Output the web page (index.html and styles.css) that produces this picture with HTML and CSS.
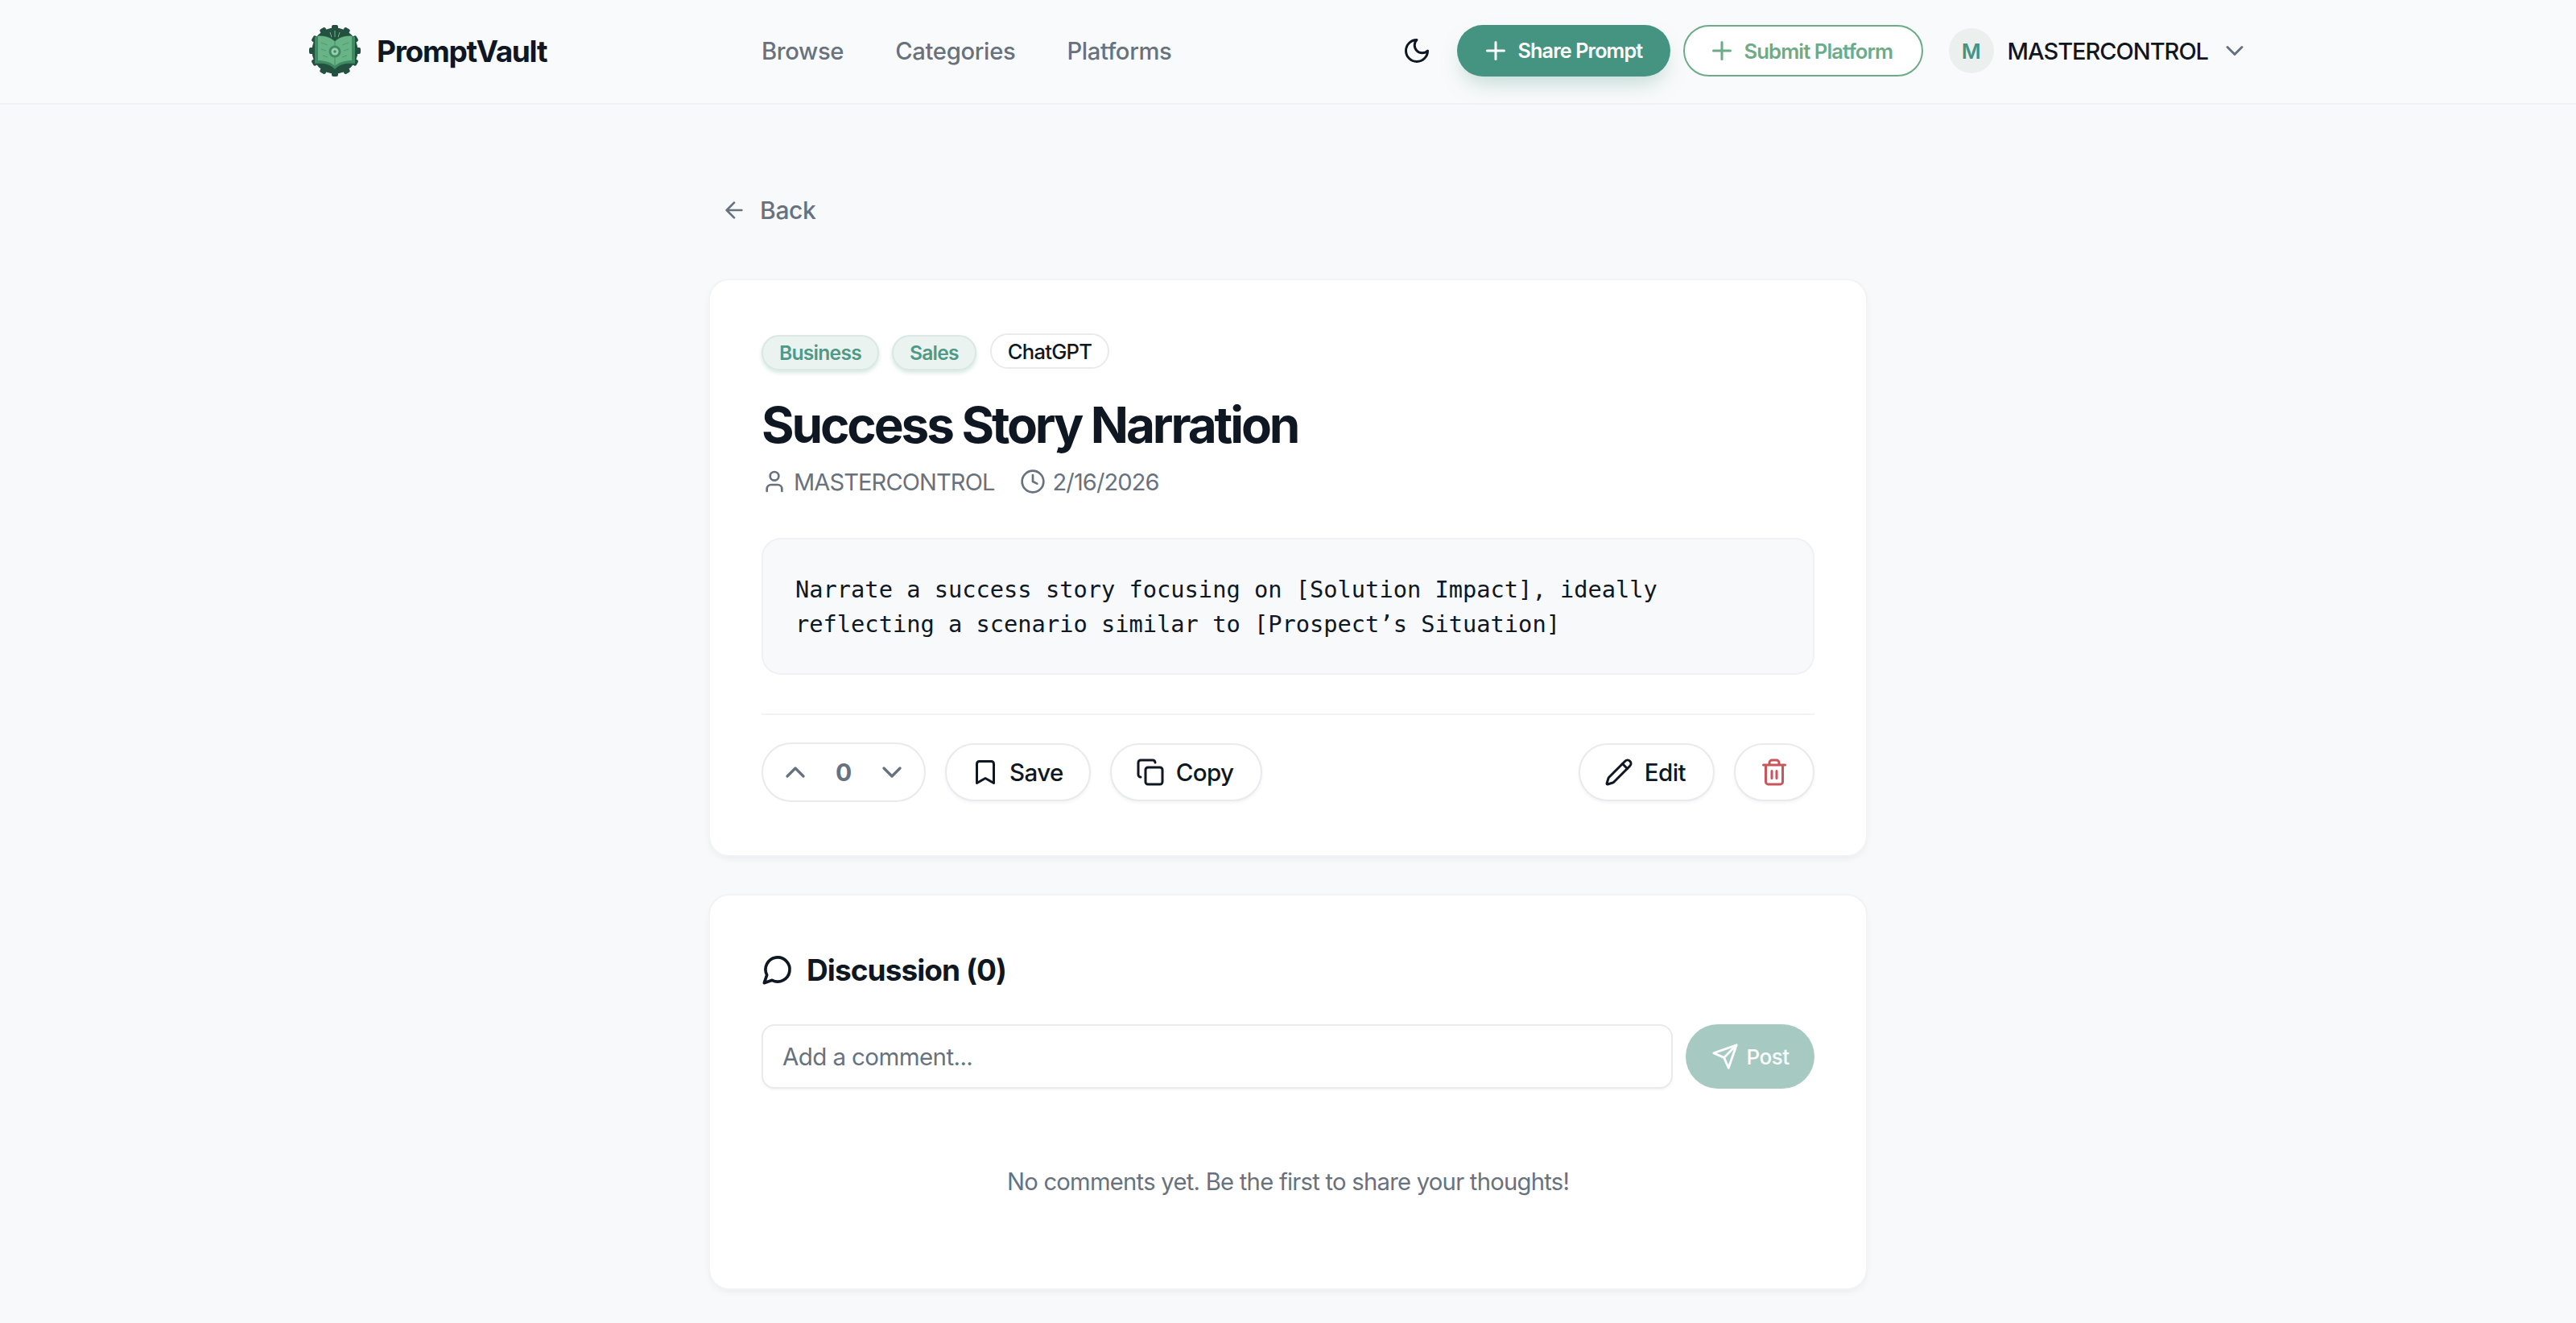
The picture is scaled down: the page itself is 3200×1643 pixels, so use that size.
FILE: index.html
```html
<!DOCTYPE html>
<html lang="en">
<head>
<meta charset="utf-8">
<title>PromptVault</title>
<link rel="stylesheet" href="styles.css">
</head>
<body>
<header class="nav">
  <div class="nav-inner">
    <a class="brand">
      <svg class="logo" viewBox="0 0 64 64">
        <g fill="#23503f">
          <circle cx="32" cy="32" r="28.500"/>
          <rect x="28" y="0" width="8" height="64" rx="2"/>
          <rect x="28" y="0" width="8" height="64" rx="2" transform="rotate(30 32 32)"/>
          <rect x="28" y="0" width="8" height="64" rx="2" transform="rotate(60 32 32)"/>
          <rect x="28" y="0" width="8" height="64" rx="2" transform="rotate(90 32 32)"/>
          <rect x="28" y="0" width="8" height="64" rx="2" transform="rotate(120 32 32)"/>
          <rect x="28" y="0" width="8" height="64" rx="2" transform="rotate(150 32 32)"/>
        </g>
        <path d="M32 20 C26 14 15 12 7 15 V48 C16 47 26 48 32 55 C38 48 48 47 57 48 V15 C49 12 38 14 32 20Z" fill="#3e8a62"/>
        <path d="M32 21 C27 16 19 13 11 14 V44 C19 44 27 46 32 51 C37 46 45 44 53 44 V14 C45 13 37 16 32 21Z" fill="#69b487"/>
        <path d="M32 21V51" stroke="#448f68" stroke-width="1"/>
        <path d="M15 22l8 3M15 30l6 2M49 22l-8 3M49 30l-6 2M17 38l6 2M47 38l-6 2" stroke="#4d9a72" stroke-width="1"/>
        <circle cx="32" cy="33" r="7.500" fill="#3d8a64"/>
        <circle cx="32" cy="33" r="4.500" fill="#9ad0ad"/>
        <circle cx="32" cy="33" r="1.800" fill="#3d8a64"/>
        <path d="M32 7v8M26 9l2 6M38 9l-2 6" stroke="#6fb98c" stroke-width="1"/>
      </svg>
      <span class="brand-name">PromptVault</span>
    </a>
    <nav class="links">
      <a>Browse</a>
      <a>Categories</a>
      <a>Platforms</a>
    </nav>
    <div class="nav-right">
      <svg class="ico moon" viewBox="0 0 24 24"><path d="M12 3a6 6 0 0 0 9 9 9 9 0 1 1-9-9Z"/></svg>
      <a class="pill-solid">
        <svg class="ico" viewBox="0 0 24 24"><path d="M5 12h14M12 5v14"/></svg>Share Prompt
      </a>
      <a class="pill-outline">
        <svg class="ico" viewBox="0 0 24 24"><path d="M5 12h14M12 5v14"/></svg>Submit Platform
      </a>
      <div class="user">
        <span class="avatar">M</span>
        <span class="user-name">MASTERCONTROL</span>
        <svg class="ico chev" viewBox="0 0 24 24"><path d="m6 9 6 6 6-6"/></svg>
      </div>
    </div>
  </div>
</header>

<main class="main">
  <a class="back">
    <svg class="ico" viewBox="0 0 24 24"><path d="m12 19-7-7 7-7M19 12H5"/></svg>Back
  </a>

  <article class="card prompt">
    <div class="tags">
      <span class="tag tag-green">Business</span>
      <span class="tag tag-green">Sales</span>
      <span class="tag tag-plain">ChatGPT</span>
    </div>
    <h1 class="title">Success Story Narration</h1>
    <div class="meta">
      <span class="meta-item">
        <svg class="ico" viewBox="0 0 24 24"><circle cx="12" cy="7" r="4"/><path d="M19 21v-2a4 4 0 0 0-4-4H9a4 4 0 0 0-4 4v2"/></svg>MASTERCONTROL
      </span>
      <span class="meta-item">
        <svg class="ico" viewBox="0 0 24 24"><circle cx="12" cy="12" r="10"/><path d="M12 6v6l4 2"/></svg>2/16/2026
      </span>
    </div>
    <pre class="code">Narrate a success story focusing on [Solution Impact], ideally
reflecting a scenario similar to [Prospect’s Situation]</pre>
    <div class="actions">
      <div class="vote">
        <svg class="ico" viewBox="0 0 24 24"><path d="m18 15-6-6-6 6"/></svg>
        <span class="count">0</span>
        <svg class="ico" viewBox="0 0 24 24"><path d="m6 9 6 6 6-6"/></svg>
      </div>
      <button class="btn">
        <svg class="ico" viewBox="0 0 24 24"><path d="m19 21-7-4-7 4V5a2 2 0 0 1 2-2h10a2 2 0 0 1 2 2v16Z"/></svg>Save
      </button>
      <button class="btn btn-wide">
        <svg class="ico" viewBox="0 0 24 24"><rect x="8" y="8" width="14" height="14" rx="2"/><path d="M4 16c-1.100 0-2-.9-2-2V4c0-1.100.9-2 2-2h10c1.100 0 2 .9 2 2"/></svg>Copy
      </button>
      <span class="spacer"></span>
      <button class="btn btn-wide">
        <svg class="ico" viewBox="0 0 24 24"><path d="M21.170 6.810a2.820 2.820 0 0 0-3.990-3.990L3.840 16.170a2 2 0 0 0-.5.830l-1.320 4.350a.5.500 0 0 0 .62.620l4.350-1.320a2 2 0 0 0 .83-.5Z"/><path d="m15 5 4 4"/></svg>Edit
      </button>
      <button class="btn btn-del" aria-label="Delete">
        <svg class="ico" viewBox="0 0 24 24"><path d="M3 6h18M19 6v14c0 1-1 2-2 2H7c-1 0-2-1-2-2V6M8 6V4c0-1 1-2 2-2h4c1 0 2 1 2 2v2M10 11v6M14 11v6"/></svg>
      </button>
    </div>
  </article>

  <section class="card discussion">
    <h2 class="disc-title">
      <svg class="ico" viewBox="0 0 24 24"><path d="M7.900 20A9 9 0 1 0 4 16.100L2 22Z"/></svg>Discussion (0)
    </h2>
    <form class="comment-form">
      <input class="comment-input" placeholder="Add a comment...">
      <button class="post" type="button">
        <svg class="ico" viewBox="0 0 24 24"><path d="m22 2-7 20-4-9-9-4ZM22 2 11 13"/></svg>Post
      </button>
    </form>
    <p class="empty">No comments yet. Be the first to share your thoughts!</p>
  </section>
</main>
</body>
</html>
```
FILE: styles.css
```css
* { box-sizing: border-box; }
html, body { margin: 0; }
body {
  background: #f8f9fb;
  color: #0f1722;
  font-family: Inter, "Liberation Sans", sans-serif;
  letter-spacing: -0.02em;
}
.ico {
  width: 36px;
  height: 36px;
  fill: none;
  stroke: currentColor;
  stroke-width: 2;
  stroke-linecap: round;
  stroke-linejoin: round;
  flex: none;
}
.nav {
  height: 130px;
  border-bottom: 2px solid #eff1f4;
  background: #f9fafb;
}
.nav-inner {
  height: 128px;
  padding: 0 86px 2px 384px;
  width: 2880px;
  display: flex;
  align-items: center;
}
.brand { display: flex; align-items: center; gap: 20px; width: 562px; flex: none; }
.logo { width: 64px; height: 64px; flex: none; }
.brand-name { font-size: 37px; font-weight: 700; letter-spacing: -0.035em; }
.links { display: flex; gap: 64px; font-size: 29.200px; font-weight: 500; color: #67727e; }
.nav-right { margin-left: auto; display: flex; align-items: center; }
.moon { width: 36px; height: 36px; color: #0f1722; margin-right: 32px; }
.pill-solid, .pill-outline {
  height: 64px;
  border-radius: 32px;
  display: flex;
  align-items: center;
  gap: 10px;
  font-size: 25.200px;
  font-weight: 600;
  letter-spacing: -0.035em;
}
.pill-solid {
  width: 265px;
  padding-left: 30px;
  background: #459481;
  color: #fff;
  box-shadow: 0 14px 28px -8px rgba(69,148,129,.35);
}
.pill-outline {
  width: 298px;
  margin-left: 16px;
  padding-left: 28px;
  border: 2px solid #6bab88;
  background: #fff;
  color: #6bab88;
  font-size: 25.600px;
}
.user { display: flex; align-items: center; margin-left: 32px; }
.avatar {
  width: 56px;
  height: 56px;
  border-radius: 50%;
  background: #ebf0ef;
  color: #459481;
  display: flex;
  align-items: center;
  justify-content: center;
  font-size: 26px;
  font-weight: 600;
}
.user-name { margin-left: 17px; font-size: 29px; font-weight: 500; letter-spacing: -0.035em; }
.chev { margin-left: 15px; color: #67727e; }
.main {
  width: 1440px;
  margin: 0 auto;
  padding: 103px 0 40px;
  display: flex;
  flex-direction: column;
}
.back {
  height: 56px;
  display: flex;
  align-items: center;
  gap: 16px;
  padding-left: 16px;
  font-size: 30px;
  font-weight: 500;
  color: #67727e;
}
.back .ico { width: 32px; height: 32px; }
.card {
  background: #fff;
  border-radius: 24px;
  box-shadow: 0 0 0 2px #f1f3f5, 0 4px 10px rgba(15,23,34,.06);
  margin: 0 2px;
}
.prompt { margin-top: 59px; height: 714px; padding: 64px; }
.tags { display: flex; gap: 16px; align-items: flex-start; margin-top: 2px; }
.tag {
  height: 44px;
  border-radius: 22px;
  padding: 0 20px;
  display: flex;
  align-items: center;
  font-size: 24.600px;
  font-weight: 600;
  letter-spacing: -0.03em;
}
.tag-green {
  margin-top: 2px;
  background: #ebf3f1;
  color: #4f9a86;
  border: 2px solid #dbe7e3;
  box-shadow: 0 3px 5px rgba(69,148,129,.22);
}
.tag-plain {
  margin-left: 1px;
  background: #fff;
  color: #0f1722;
  border: 2px solid #e8eaed;
  font-size: 25.600px;
  font-weight: 500;
}
.title {
  margin: 26px 0 0;
  font-size: 62px;
  line-height: 84px;
  font-weight: 700;
  letter-spacing: -0.05em;
}
.meta { display: flex; gap: 32px; margin-top: 6px; color: #67727e; font-size: 29px; height: 44px; letter-spacing: -0.03em; }
.meta-item { display: flex; align-items: center; gap: 8px; }
.meta .ico { width: 32px; height: 32px; }
.code {
  margin: 48px 0 0;
  height: 170px;
  padding: 41px 40px;
  background: #f8f9fb;
  border: 2px solid #eff1f4;
  border-radius: 24px;
  font-family: "DejaVu Sans Mono", "Liberation Mono", monospace;
  font-size: 28.700px;
  line-height: 43px;
  letter-spacing: 0;
  color: #0f1722;
}
.actions {
  margin-top: 48px;
  padding-top: 34px;
  border-top: 2px solid #f1f3f5;
  display: flex;
  align-items: center;
  gap: 24px;
}
.spacer { flex: 1; }
.vote {
  width: 204px;
  height: 74px;
  border: 2px solid #e8eaed;
  border-radius: 37px;
  display: flex;
  align-items: center;
  justify-content: space-between;
  padding: 0 20px;
  color: #67727e;
}
.vote .ico { width: 40px; height: 40px; }
.count { font-size: 30px; font-weight: 700; }
.btn {
  height: 72px;
  border: 2px solid #e8eaed;
  border-radius: 36px;
  background: #fff;
  display: flex;
  align-items: center;
  gap: 12px;
  padding: 0 32px 0 30px;
  font: 500 29.500px Inter, "Liberation Sans", sans-serif;
  letter-spacing: -0.02em;
  color: #0f1722;
  box-shadow: 0 2px 4px rgba(15,23,34,.05);
}
.btn-wide { gap: 14px; padding-right: 34px; }
.btn-del { width: 100px; padding: 0; justify-content: center; color: #c8555a; }
.discussion { margin-top: 50px; height: 488px; padding: 64px; }
.disc-title {
  margin: -2px 0 0;
  display: flex;
  align-items: center;
  gap: 16px;
  height: 60px;
  font-size: 37px;
  font-weight: 700;
  letter-spacing: -0.025em;
}
.disc-title .ico { width: 40px; height: 40px; stroke-width: 2.200; }
.comment-form { display: flex; gap: 16px; margin-top: 38px; }
.comment-input {
  flex: 1;
  height: 80px;
  border: 2px solid #e8eaed;
  border-radius: 16px;
  padding: 0 24px;
  font: 400 29.500px Inter, "Liberation Sans", sans-serif;
  letter-spacing: -0.02em;
  background: #fff;
  box-shadow: 0 2px 3px rgba(15,23,34,.04);
}
.comment-input::placeholder { color: #67727e; opacity: 1; }
.post {
  width: 160px;
  height: 80px;
  border: 0;
  border-radius: 40px;
  background: #a6cac1;
  color: #fff;
  display: flex;
  align-items: center;
  justify-content: center;
  gap: 10px;
  font: 500 26px Inter, "Liberation Sans", sans-serif;
  letter-spacing: -0.02em;
}
.post .ico { width: 34px; height: 34px; }
.empty {
  margin: 96px 0 0;
  text-align: center;
  font-size: 29.200px;
  line-height: 40px;
  color: #67727e;
  letter-spacing: -0.025em;
}
```
